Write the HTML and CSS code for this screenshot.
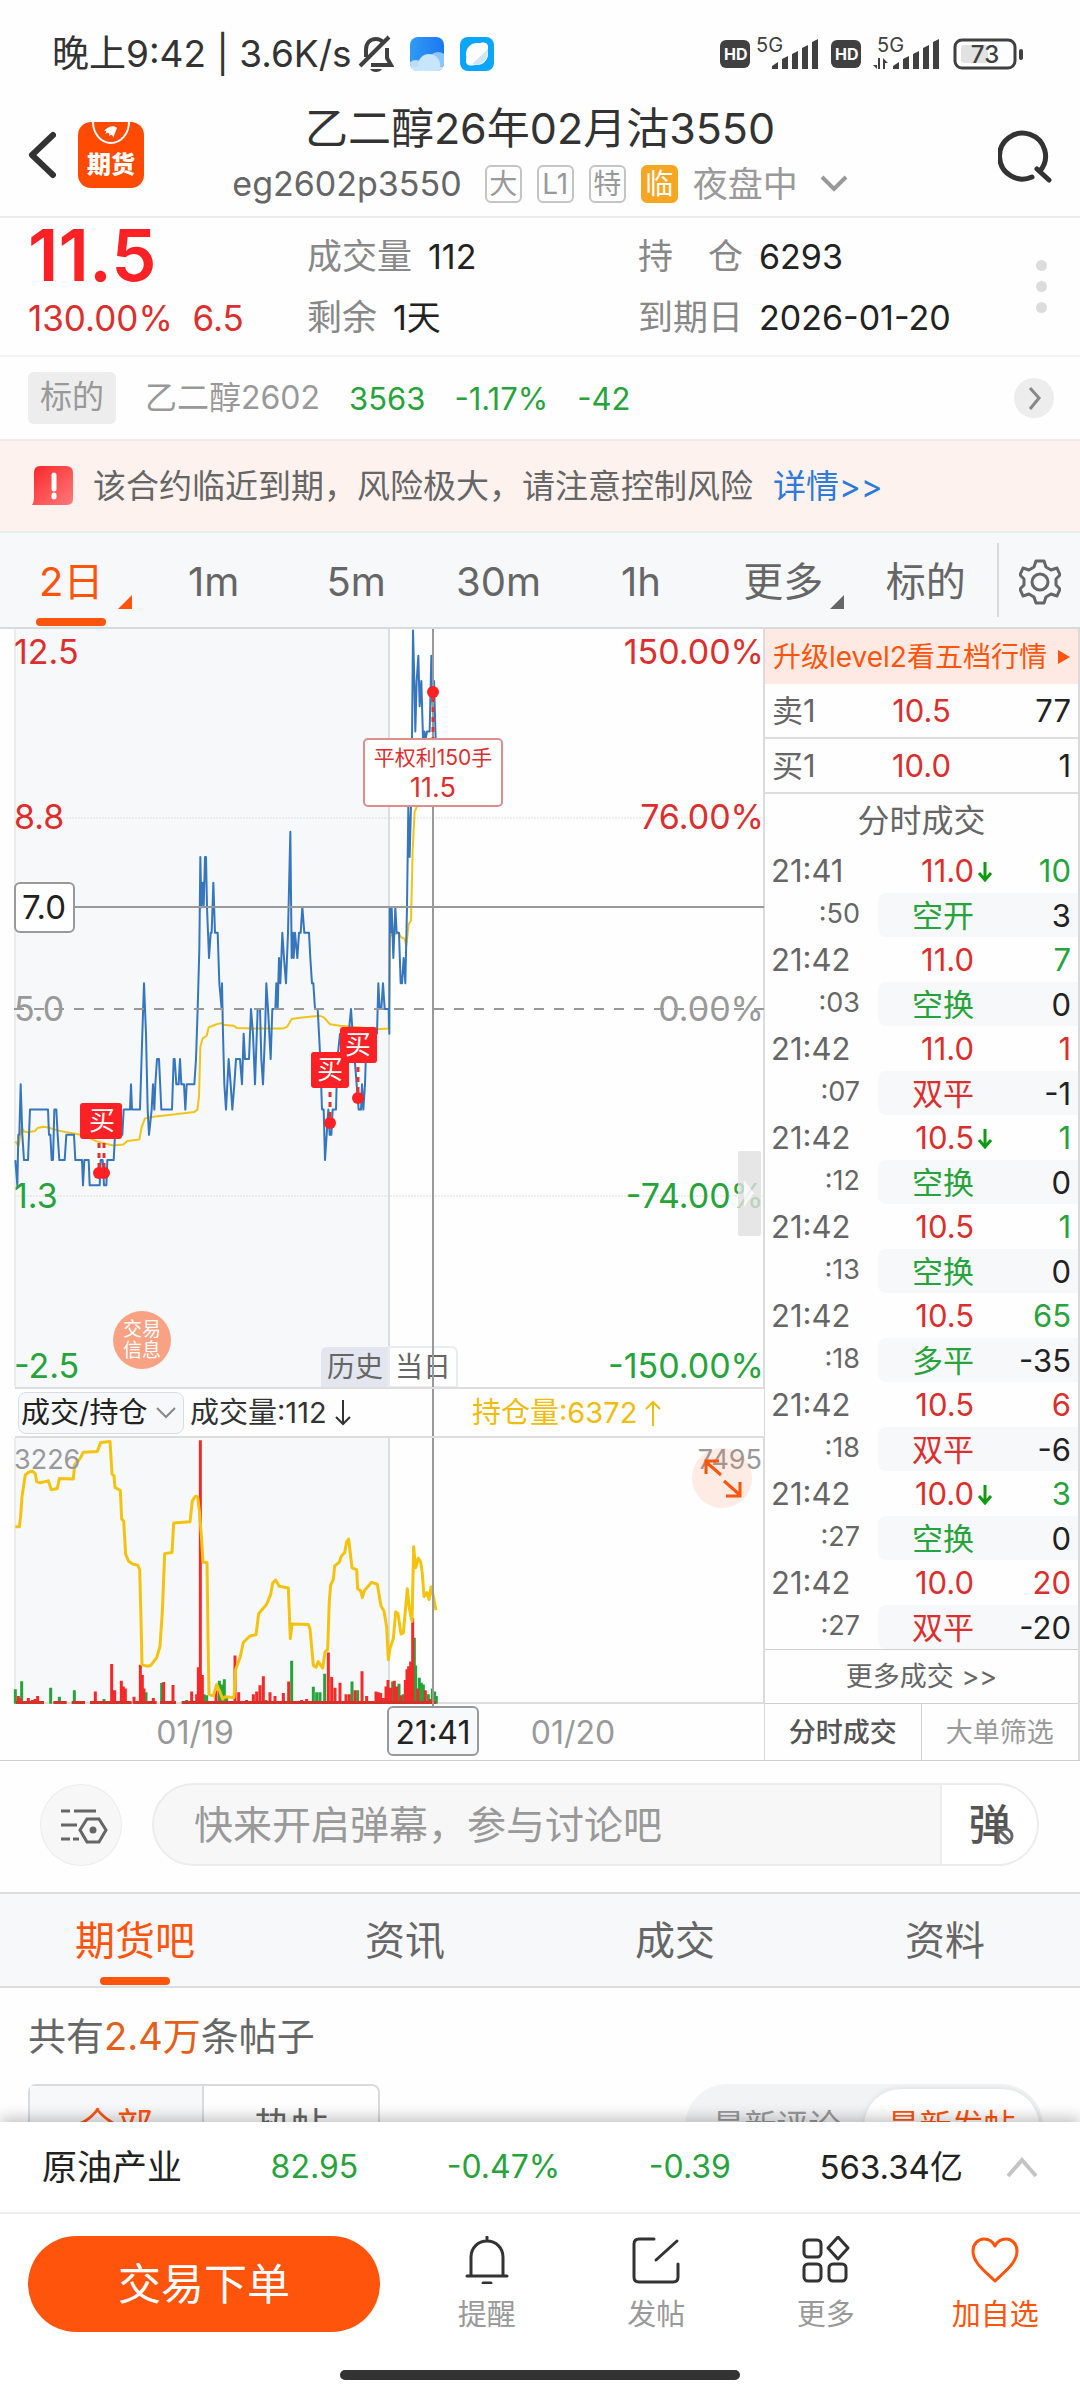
FILE: index.html
```html
<!DOCTYPE html>
<html lang="zh-CN">
<head>
<meta charset="utf-8">
<meta name="viewport" content="width=device-width, initial-scale=1">
<title>乙二醇26年02月沽3550</title>
<link rel="stylesheet" href="styles.css">
</head>
<body>
<div class="app">
  <header class="top">
    <div class="status">
      <span class="status-text">晚上9:42 | 3.6K/s</span>
      <svg class="status-bell" width="36" height="38" viewBox="0 0 36 38" fill="none" stroke="#404040" stroke-width="4">
        <path d="M8 22V15C8 8 12 4 18 4C21 4 23 5 25 7M29 13V23L33 30H13M2 31L31 2"/>
        <path d="M12 34H24C22 38 14 38 12 34Z" fill="#404040" stroke="none"/>
      </svg>
      <svg class="status-app" width="34" height="34" viewBox="0 0 34 34">
        <defs>
          <linearGradient id="sky" x1="0" x2="1"><stop offset="0" stop-color="#2f9bf5"/><stop offset="1" stop-color="#1c78f0"/></linearGradient>
          <clipPath id="tile"><rect width="34" height="34" rx="8"/></clipPath>
        </defs>
        <g clip-path="url(#tile)">
          <rect width="34" height="34" fill="url(#sky)"/>
          <circle cx="28" cy="25" r="10" fill="#8cc5fa"/>
          <circle cx="6" cy="32" r="9" fill="#b9defd"/>
          <circle cx="19" cy="28" r="11" fill="#c8e5fe"/>
          <rect y="30" width="34" height="4" fill="#c8e5fe"/>
        </g>
      </svg>
      <svg class="status-app" width="34" height="34" viewBox="0 0 34 34">
        <rect width="34" height="34" rx="8" fill="#0ba5fb"/>
        <circle cx="17" cy="17" r="11" fill="#fff"/>
        <path d="M7 27C5 25 6 20 8 17L17 27C13 29 9 29 7 27ZM27 7C29 9 28 14 26 17L18 7C21 5 25 5 27 7Z" fill="#fff"/>
        <path d="M28 12L12 27C19 30 28 25 28 12Z" fill="#cfe6f8"/>
      </svg>
      <svg class="status-right" width="306" height="54" viewBox="0 -8 306 54" fill="#404040">
        <rect x="0" y="5" width="30" height="28" rx="6"/>
        <text class="hd" x="4" y="25">HD</text>
        <text class="net" x="36" y="17">5G</text>
        <path id="bars" d="M52 34V31L58 27V34ZM62 34V24L68 21V34ZM72 34V19L78 16V34ZM82 34V13L88 10V34ZM92 34V7L98 4V34Z"/>
        <rect x="111" y="5" width="30" height="28" rx="6"/>
        <text class="hd" x="115" y="25">HD</text>
        <text class="net" x="157" y="17">5G</text>
        <use href="#bars" x="121"/>
        <path d="M157 23V34L153 30H157ZM158 23H160V34H158ZM163 23L168 28H165V34H163Z"/>
        <rect x="235" y="5" width="60" height="28" rx="7" fill="none" stroke="#404040" stroke-width="3"/>
        <rect x="241" y="10" width="27" height="18" rx="3" fill="#e2e2e2"/>
        <text class="batt" x="265" y="28" text-anchor="middle">73</text>
        <rect x="299" y="14" width="4" height="11" rx="2"/>
      </svg>
    </div>
    <div class="titlebar">
      <div class="title-left">
        <button class="back" aria-label="返回">
          <svg width="28" height="48" viewBox="0 0 28 48" fill="none" stroke="#333" stroke-width="6" stroke-linecap="round" stroke-linejoin="round"><path d="M25 4L4 24L25 44"/></svg>
        </button>
        <svg class="logo" width="66" height="66" viewBox="0 0 66 66">
          <rect width="66" height="66" rx="13" fill="#ff4a04"/>
          <path d="M15 0A18 21 0 0 0 51 0" fill="none" stroke="#fff" stroke-width="2"/>
          <path d="M26 9C30 4 36 3 39 6L35 16C35 12 33 13 31 14C32 10 30 11 27 12C29 9 28 8 26 9Z" fill="#fff"/>
          <text x="33" y="51" text-anchor="middle">期货</text>
        </svg>
      </div>
      <div class="heading">
        <h1>乙二醇26年02月沽3550</h1>
        <div class="subhead">
          <span class="code">eg2602p3550</span>
          <span class="tag">大</span><span class="tag">L1</span><span class="tag">特</span><span class="tag tag-warn">临</span>
          <span class="session">夜盘中</span>
          <svg width="28" height="18" viewBox="0 0 28 18" fill="none" stroke="#999" stroke-width="4"><path d="M2 2L14 14L26 2"/></svg>
        </div>
      </div>
      <button class="search" aria-label="搜索">
        <svg width="54" height="54" viewBox="0 0 54 54" fill="none" stroke="#333" stroke-width="5" stroke-linecap="round"><path d="M34 48A23 23 0 1 1 42 42M39 40L51 51"/></svg>
      </button>
    </div>
  </header>

  <main class="content">
    <section class="quote">
      <div class="price"><strong>11.5</strong><span>130.00%&nbsp; 6.5</span></div>
      <dl class="stats">
        <div><dt>成交量</dt><dd>112</dd></div>
        <div><dt>剩余</dt><dd>1天</dd></div>
      </dl>
      <dl class="stats stats-wide">
        <div><dt>持　仓</dt><dd>6293</dd></div>
        <div><dt>到期日</dt><dd>2026-01-20</dd></div>
      </dl>
      <button class="dots" aria-label="更多信息"><i></i><i></i><i></i></button>
    </section>

    <section class="underlying">
      <span class="chip">标的</span>
      <span class="name">乙二醇2602</span>
      <span class="down">3563</span><span class="down">-1.17%</span><span class="down">-42</span>
      <button class="go" aria-label="查看标的"><svg width="41" height="41" viewBox="0 0 41 41" fill="none"><circle cx="20" cy="20" r="20" fill="#ededed"/><path d="M16 10L25 20L16 31" stroke="#888" stroke-width="3"/></svg></button>
    </section>

    <section class="notice">
      <svg width="41" height="40" viewBox="0 0 41 40">
        <defs><linearGradient id="alert" x1="0" y1="0" x2="1" y2="1"><stop offset="0" stop-color="#f9262b"/><stop offset="1" stop-color="#ff7a7a"/></linearGradient></defs>
        <path d="M8 0H34Q41 0 41 7V33Q41 39 34 39H0Q2 36 2 32V7Q2 0 8 0Z" fill="url(#alert)"/>
        <path d="M22 9V23M22 29V31" stroke="#fff" stroke-width="5" stroke-linecap="round"/>
      </svg>
      <span>该合约临近到期，风险极大，请注意控制风险</span>
      <a href="#detail">详情&gt;&gt;</a>
    </section>

    <nav class="periods">
      <button class="on">2日<svg class="corner" width="14" height="14"><path d="M14 0V14H0Z" fill="#ff540c"/></svg></button>
      <button>1m</button><button>5m</button><button>30m</button><button>1h</button>
      <button>更多<svg class="corner" width="14" height="14"><path d="M14 0V14H0Z" fill="#666"/></svg></button>
      <button>标的</button>
      <button class="gear" aria-label="设置">
        <svg width="42" height="46" viewBox="0 0 42 46" fill="none" stroke="#666" stroke-width="3" stroke-linejoin="round"><path d="M17 2H25L27 8L32 11L38 9L41 16L37 20V26L41 30L38 37L32 35L27 38L25 44H17L15 38L10 35L4 37L1 30L5 26V20L1 16L4 9L10 11L15 8Z"/><circle cx="21" cy="23" r="8"/></svg>
      </button>
    </nav>

    <section class="market">
      <div class="chart">
        <svg class="plot" viewBox="0 0 764 758">
          <rect x="15" y="0" width="374" height="758" fill="#f6f8fa"/>
          <path d="M15 0V758" stroke="#ddd" stroke-width="1"/>
          <path d="M389 0V758M764 0V758" stroke="#ddd" stroke-width="2"/>
          <path d="M15 189H764M15 567H764" stroke="#ddd" stroke-width="1" stroke-dasharray="2 1"/>
          <svg x="0" y="0" width="764" height="758" viewBox="0 23 2292 1981" preserveAspectRatio="none" class="lines">
            <path stroke="#f0c419" d="M46 1362L56 1374L65 1325L72 1336L84 1338L105 1335L113 1327L130 1324L145 1326L175 1334L225 1342L250 1346L290 1362L340 1373L370 1370L382 1361L418 1357L425 1325L435 1302L460 1298L520 1292L583 1285L592 1279L597 1245L601 1115L608 1093L620 1086L626 1064L650 1056L664 1053L674 1058L702 1060L710 1066L760 1067L850 1067L862 1062L875 1042L900 1039L960 1034L972 1038L990 1056L1020 1060L1075 1064L1130 1069L1166 1067L1170 825L1195 817L1203 828L1214 833L1219 850L1226 795L1233 785L1238 600L1244 500L1252 485"/>
            <path stroke="#3576bf" d="M46 1411L52 1477L55 1345L58 1345L62 1213L67 1345L72 1411L84 1411L90 1279L144 1279L147 1345L151 1345L155 1411L159 1411L163 1279L169 1279L173 1345L178 1411L194 1411L199 1345L222 1345L226 1411L246 1411L249 1477L253 1411L266 1411L269 1477L299 1477L302 1411L308 1411L312 1477L319 1477L322 1411L341 1411L345 1345L367 1345L371 1279L390 1279L393 1213L396 1279L420 1279L427 1081L432 949L438 1081L443 1279L447 1345L455 1279L459 1213L463 1279L466 1213L471 1147L477 1147L484 1279L516 1279L521 1147L524 1147L529 1213L536 1213L540 1147L544 1213L552 1213L556 1279L560 1213L583 1213L588 1147L593 1016L598 860L601 619L604 750L608 686L611 750L615 619L618 619L621 750L627 883L632 817L635 817L640 686L645 817L653 817L658 949L665 1016L666 949L669 1081L673 1213L678 1279L686 1147L692 1213L697 1279L703 1213L708 1147L720 1147L726 1213L731 1081L735 1147L747 1147L753 1016L759 1081L765 1213L773 1016L780 1016L784 1147L789 1213L795 1081L799 949L804 1016L812 1147L817 1016L826 1016L829 949L833 1016L837 883L841 949L847 817L852 883L858 949L864 817L871 553L875 883L879 817L881 883L885 817L892 883L897 817L902 817L907 750L913 817L927 817L931 883L936 949L940 949L945 1016L953 1016L957 1081L961 1147L966 1279L971 1279L975 1411L980 1345L985 1279L989 1345L994 1345L998 1279L1008 1279L1012 1147L1020 1081L1046 1081L1053 1016L1058 1081L1064 1147L1070 1213L1076 1279L1083 1279L1086 1213L1090 1279L1095 1213L1100 1081L1131 1081L1135 949L1139 1016L1144 1016L1149 949L1154 1016L1166 1016L1168 1081L1169 750L1172 817L1175 750L1180 883L1186 750L1190 817L1197 817L1202 949L1206 949L1211 883L1216 949L1221 750L1225 487L1229 619L1233 487L1236 310L1239 27L1243 159L1246 291L1250 159L1255 93L1259 225L1264 159L1269 310L1273 291L1277 310L1281 291L1289 291L1294 93L1298 225L1302 159L1307 310"/>
          </svg>
          <path d="M14 380H764" stroke="#999" stroke-width="2" stroke-dasharray="10 10"/>
          <path d="M15 278H764" stroke="#999" stroke-width="2"/>
          <g class="day"><path d="M389 718H327Q321 718 321 724V758H389Z" fill="#e3e6ee"/><path d="M389 718H451Q457 718 457 724V758H389Z" fill="#fff" stroke="#e9ebf2" stroke-width="2"/><text x="327" y="748">历史</text><text x="395" y="748">当日</text></g>
          <path d="M433 0V758" stroke="#999" stroke-width="2"/>
          <g class="axis">
            <g fill="#dc2f2d"><text x="14" y="35">12.5</text><text x="14" y="200">8.8</text></g>
            <g fill="#999"><text x="14" y="392">5.0</text></g>
            <g fill="#26a43b"><text x="14" y="579">1.3</text><text x="14" y="749">-2.5</text></g>
            <g text-anchor="end">
              <g fill="#dc2f2d"><text x="764" y="35">150.00%</text><text x="764" y="200">76.00%</text></g>
              <text x="764" y="392" fill="#999">0.00%</text>
              <g fill="#26a43b"><text x="764" y="579">-74.00%</text><text x="764" y="749">-150.00%</text></g>
            </g>
            <rect x="15" y="254" width="59" height="49" rx="5" fill="#fff" stroke="#999" stroke-width="2"/>
            <text x="44" y="290" text-anchor="middle" fill="#222" class="cursor">7.0</text>
          </g>
          <g stroke="#e53030" stroke-width="3" stroke-dasharray="5 5"><path d="M99 514V540M104 514V540M330 463V490M358 438V466M433 68V110"/></g>
          <g fill="#fb2124">
            <circle cx="99" cy="544" r="6"/><circle cx="104" cy="544" r="6"/><circle cx="330" cy="494" r="6"/><circle cx="358" cy="469" r="6"/><circle cx="433" cy="63" r="6"/>
            <rect x="80" y="474" width="42" height="36" rx="3"/><rect x="311" y="423" width="38" height="36" rx="3"/><rect x="340" y="398" width="37" height="36" rx="3"/>
          </g>
          <g class="buy" text-anchor="middle"><text x="102" y="501">买</text><text x="330" y="450">买</text><text x="358" y="425">买</text></g>
          <rect x="364" y="110" width="138" height="67" rx="4" fill="#fff" stroke="#dd8f8f" stroke-width="2"/>
          <g class="deal" text-anchor="middle"><text x="433" y="136">平权利150手</text><text class="deal-price" x="433" y="168">11.5</text></g>
          <circle cx="142" cy="711" r="29" fill="#f9a283"/>
          <g class="info" text-anchor="middle"><text x="142" y="707">交易</text><text x="142" y="728">信息</text></g>
          <rect x="738" y="522" width="23" height="85" rx="2" fill="#e0e0e0" fill-opacity=".8"/>
          <path d="M744 551L754 564L744 578Z" fill="#fff" fill-opacity=".7"/>
        </svg>
        <div class="legend">
          <select class="indicator" aria-label="指标"><option>成交/持仓</option></select>
          <span class="vol">成交量:112<svg width="16" height="26" viewBox="0 0 16 26" fill="none" stroke="#333" stroke-width="2"><path d="M8 0V24M1 17L8 24L15 17"/></svg></span>
          <span class="oi">持仓量:6372<svg width="16" height="26" viewBox="0 0 16 26" fill="none" stroke="#efbc10" stroke-width="2"><path d="M8 26V2M1 9L8 2L15 9"/></svg></span>
        </div>
        <svg class="plot" viewBox="0 0 764 322">
          <rect x="15" y="0" width="374" height="265" fill="#f6f8fa"/>
          <path d="M15 0V265" stroke="#ddd" stroke-width="1"/>
          <path d="M389 0V265M764 0V265M15 265H764" stroke="#ddd" stroke-width="2"/>
          <svg x="0" y="0" width="764" height="322" viewBox="0 726 2292 841" preserveAspectRatio="none" class="bars">
            <path stroke="#26a43b" d="M46 1420V1382M65 1420V1361M152 1420V1378M178 1420V1402M223 1420V1385M312 1420V1408M438 1420V1390M485 1420V1366M560 1420V1410M612 1420V1395M620 1420V1398M658 1420V1360M666 1420V1370M673 1420V1356M680 1420V1400M798 1420V1410M875 1420V1308M940 1420V1376M950 1420V1390M960 1420V1390M974 1420V1342M1056 1420V1362M1073 1420V1385M1178 1420V1362M1197 1420V1368M1210 1420V1395M1247 1420V1320M1243 1420V1248M1258 1420V1352M1264 1420V1365M1270 1420V1370M1285 1420V1395M1297 1420V1380M1304 1420V1388M1309 1420V1400"/>
            <path stroke="#f42a2a" d="M55 1420V1400M60 1420V1405M85 1420V1405M97 1420V1410M105 1420V1408M113 1420V1400M286 1420V1388M335 1420V1316M344 1420V1385M364 1420V1360M370 1420V1375M376 1420V1380M402 1420V1402M421 1420V1318M427 1420V1345M432 1420V1380M460 1420V1405M491 1420V1363M519 1420V1371M575 1420V1388M590 1420V1395M595 1420V1325M601 1420V732M607 1420V1345M648 1420V1385M705 1420V1294M716 1420V1390M740 1420V1410M760 1420V1395M770 1420V1388M780 1420V1372M790 1420V1348M810 1420V1390M825 1420V1400M850 1420V1392M866 1420V1362M905 1420V1410M920 1420V1408M985 1420V1286M995 1420V1350M1005 1420V1378M1020 1420V1365M1038 1420V1395M1048 1420V1395M1065 1420V1385M1086 1420V1335M1100 1420V1400M1128 1420V1388M1135 1420V1390M1142 1420V1392M1150 1420V1405M1158 1420V1375M1164 1420V1358M1172 1420V1378M1183 1420V1360M1190 1420V1375M1203 1420V1398M1216 1420V1358M1221 1420V1330M1226 1420V1322M1232 1420V1310M1238 1420V1197M1253 1420V1380M1276 1420V1385M1290 1420V1408"/>
            <path stroke="#d2322a" d="M48 1417H132M160 1417H200M215 1417H255M270 1417H395M400 1417H470M480 1417H528M545 1417H1308"/>
            <path stroke="#f4c30f" class="oi-line" d="M46 958L58 958L62 930L66 880L71 850L76 822L85 816L97 812L106 820L110 840L120 843L145 838L154 861L172 858L178 832L220 833L224 795L240 780L250 763L292 761L302 738L330 735L336 820L342 825L345 855L361 863L365 938L371 943L377 1030L386 1048L398 1055L413 1058L419 1070L423 1200L426 1318L440 1322L452 1320L470 1300L480 1270L487 1180L494 1028L516 1025L521 948L570 945L577 890L586 878L593 880L598 915L604 980L609 1050L621 1052L624 1250L627 1395L640 1400L650 1370L658 1385L668 1408L675 1402L702 1404L707 1330L720 1300L730 1260L750 1243L768 1240L776 1185L800 1160L812 1135L818 1105L827 1097L838 1113L865 1118L871 1250L876 1212L925 1213L930 1225L940 1320L948 1325L955 1310L968 1327L975 1285L983 1278L988 1150L992 1110L1000 1095L1004 1060L1018 1050L1024 1035L1034 1025L1040 997L1046 990L1056 1065L1070 1070L1073 1120L1082 1125L1087 1143L1093 1125L1115 1103L1132 1108L1143 1165L1152 1178L1160 1220L1165 1305L1170 1275L1180 1250L1187 1180L1194 1185L1203 1238L1210 1235L1222 1120L1228 1170L1236 1205L1241 1010L1247 1065L1255 1040L1262 1050L1267 1080L1272 1140L1281 1130L1287 1148L1293 1115L1300 1140L1308 1176"/>
          </svg>
          <path d="M433 0V268" stroke="#999" stroke-width="2"/>
          <g class="scale"><text x="14" y="31">3226</text><text x="762" y="31" text-anchor="end">7495</text></g>
          <circle cx="722" cy="40" r="30" fill="#ff6a30" fill-opacity=".13"/>
          <path d="M721 37L706 24M706 36V23H719M724 43L740 57M740 44V58H726" fill="none" stroke="#ff540c" stroke-width="3"/>
          <g class="dates" text-anchor="middle"><text x="195" y="306">01/19</text><text x="573" y="306">01/20</text>
            <rect x="388" y="269" width="90" height="48" rx="5" fill="#f7f9fb" stroke="#999" stroke-width="2"/>
            <text x="433" y="306" class="now">21:41</text></g>
        </svg>
      </div>

      <aside class="book">
        <a class="upgrade" href="#level2">升级level2看五档行情<svg width="12" height="14"><path d="M0 0L12 7L0 14Z" fill="#ff540c"/></svg></a>
        <div class="level"><span>卖1</span><b>10.5</b><em>77</em></div>
        <div class="level"><span>买1</span><b>10.0</b><em>1</em></div>
        <h2>分时成交</h2>
        <table class="trades">
          <tbody>
            <tr><th>21:41</th><td class="up">11.0<svg class="tick" width="16" height="20" viewBox="0 0 16 20"><path d="M8 0V17M2 11L8 18L14 11"/></svg></td><td class="down">10</td></tr>
            <tr class="sub"><th>:50</th><td class="down">空开</td><td>3</td></tr>
            <tr><th>21:42</th><td class="up">11.0</td><td class="down">7</td></tr>
            <tr class="sub"><th>:03</th><td class="down">空换</td><td>0</td></tr>
            <tr><th>21:42</th><td class="up">11.0</td><td class="up">1</td></tr>
            <tr class="sub"><th>:07</th><td class="up">双平</td><td>-1</td></tr>
            <tr><th>21:42</th><td class="up">10.5<svg class="tick" width="16" height="20" viewBox="0 0 16 20"><path d="M8 0V17M2 11L8 18L14 11"/></svg></td><td class="down">1</td></tr>
            <tr class="sub"><th>:12</th><td class="down">空换</td><td>0</td></tr>
            <tr><th>21:42</th><td class="up">10.5</td><td class="down">1</td></tr>
            <tr class="sub"><th>:13</th><td class="down">空换</td><td>0</td></tr>
            <tr><th>21:42</th><td class="up">10.5</td><td class="down">65</td></tr>
            <tr class="sub"><th>:18</th><td class="down">多平</td><td>-35</td></tr>
            <tr><th>21:42</th><td class="up">10.5</td><td class="up">6</td></tr>
            <tr class="sub"><th>:18</th><td class="up">双平</td><td>-6</td></tr>
            <tr><th>21:42</th><td class="up">10.0<svg class="tick" width="16" height="20" viewBox="0 0 16 20"><path d="M8 0V17M2 11L8 18L14 11"/></svg></td><td class="down">3</td></tr>
            <tr class="sub"><th>:27</th><td class="down">空换</td><td>0</td></tr>
            <tr><th>21:42</th><td class="up">10.0</td><td class="up">20</td></tr>
            <tr class="sub"><th>:27</th><td class="up">双平</td><td>-20</td></tr>
          </tbody>
        </table>
        <a class="more-trades" href="#trades">更多成交 &gt;&gt;</a>
        <div class="book-tabs"><button class="on">分时成交</button><button>大单筛选</button></div>
      </aside>
    </section>

    <section class="danmaku">
      <button class="dm-set" aria-label="弹幕设置">
        <svg width="80" height="80" viewBox="0 0 80 80" fill="none" stroke="#666" stroke-width="3"><path d="M20 26H29M33 26H55M20 40H36M20 54H29M32 54H38M46 34H58L65 45L58 57H46L39 45Z"/><circle cx="52" cy="45" r="2" fill="#666"/></svg>
      </button>
      <div class="dm-box">
        <input type="text" aria-label="弹幕" placeholder="快来开启弹幕，参与讨论吧">
        <button class="dm-toggle" aria-label="弹幕开关">弹<svg width="20" height="20" viewBox="0 0 20 20" fill="#fff" stroke="#666" stroke-width="3"><circle cx="10" cy="10" r="7"/><path d="M5 5L15 15"/></svg></button>
      </div>
    </section>

    <nav class="sections">
      <button class="on">期货吧</button><button>资讯</button><button>成交</button><button>资料</button>
    </nav>

    <section class="posts">
      <p>共有<b>2.4万</b>条帖子</p>
      <div class="filters">
        <div class="kind"><button class="on">全部</button><button>热帖</button></div>
        <div class="sort"><button>最新评论</button><button class="on">最新发帖</button></div>
      </div>
    </section>
  </main>

  <footer class="bottom">
    <div class="ticker">
      <div class="ticker-data"><span class="sector">原油产业</span><span class="down">82.95</span><span class="down">-0.47%</span><span class="down">-0.39</span><span>563.34亿</span></div>
      <svg width="32" height="22" viewBox="0 0 32 22" fill="none" stroke="#c4c4c4" stroke-width="4"><path d="M2 20L16 4L30 20"/></svg>
    </div>
    <div class="actions">
      <button class="order">交易下单</button>
      <button class="act"><svg width="48" height="48" viewBox="0 0 48 48" fill="none" stroke="#333" stroke-width="3" stroke-linecap="round"><path d="M24 1V5M8 39V21C8 12 15 5 24 5S40 12 40 21V39M4 40H44M20 47H28"/></svg>提醒</button>
      <button class="act"><svg width="48" height="48" viewBox="0 0 48 48" fill="none" stroke="#333" stroke-width="3" stroke-linecap="round"><path d="M22 3H7Q2 3 2 8V41Q2 46 7 46H41Q46 46 46 41V28M45 5L24 24"/></svg>发帖</button>
      <button class="act"><svg width="48" height="48" viewBox="0 0 48 48" fill="none" stroke="#333" stroke-width="3" stroke-linejoin="round"><rect x="2" y="4" width="17" height="17" rx="4"/><rect x="2" y="28" width="17" height="17" rx="4"/><rect x="27" y="28" width="17" height="17" rx="4"/><path d="M36 1L46 12L36 23L26 12Z"/></svg>更多</button>
      <button class="act fav"><svg width="48" height="48" viewBox="0 0 48 48" fill="none" stroke="#ff540c" stroke-width="3" stroke-linejoin="round"><path d="M24 45C14 35 2 27 2 15C2 8 7 3 13 3C18 3 22 6 24 10C26 6 30 3 35 3C41 3 46 8 46 15C46 27 34 35 24 45Z"/></svg>加自选</button>
    </div>
    <div class="home"></div>
  </footer>
</div>
</body>
</html>
```
FILE: styles.css
```css
* { box-sizing: border-box; }
body {
  margin: 0;
  font-family: Inter, "Noto Sans CJK SC", sans-serif;
  color: #222;
  background: #fefefe;
  line-height: 1;
}
button { border: 0; padding: 0; background: none; font: inherit; color: inherit; }
a { text-decoration: none; }
h1, h2, p, dl, dd { margin: 0; font-weight: 400; }
svg { display: block; flex: none; }
.up { color: #dc2f2d; }
.down { color: #26a43b; }

.app { display: flex; flex-direction: column; height: 100vh; min-height: 800px; }
.top, .bottom { flex: none; }
.content { flex: 1; min-height: 0; overflow-y: auto; scrollbar-width: none; }

/* status bar and title */
.status { display: flex; align-items: center; height: 108px; padding: 0 54px 0 52px; }
.status-text { font-size: 37px; line-height: 48px; color: #333; }
.status-bell { margin-left: 6px; }
.status-app { margin-left: 16px; }
.status-right { margin-left: auto; }
.hd { font-size: 16px; font-weight: 700; fill: #fff; }
.net { font-size: 20px; }
.batt { font-size: 24px; font-weight: 500; }
.titlebar { display: grid; grid-template-columns: 116px 1fr 116px; align-items: start; height: 110px; padding: 0 28px; border-bottom: 2px solid #ececec; }
.title-left { display: flex; align-items: center; gap: 22px; padding-top: 14px; }
.logo text { font-size: 24px; font-weight: 900; fill: #fff; }
.heading { display: flex; flex-direction: column; align-items: center; }
.heading h1 { font-size: 43px; line-height: 50px; margin: -5px 0 11px; color: #333; white-space: nowrap; }
.subhead { display: flex; align-items: center; color: #666; }
.code { font-size: 34px; margin-right: 23px; line-height: 40px; }
.tag { width: 37px; height: 38px; margin-right: 15px; border: 2px solid #c4c4c4; border-radius: 6px; font-size: 28px; line-height: 34px; text-align: center; color: #999; }
.tag-warn { background: #f5a623; border-color: #f5a623; color: #fff; }
.session { font-size: 35px; color: #999; margin-right: 22px; }
.search { justify-self: end; margin-top: 21px; }

/* quote */
.quote { display: flex; height: 139px; padding: 0 32px 0 28px; border-bottom: 2px solid #f2f2f2; }
.price { width: 279px; color: #dc2f2d; }
.price strong { display: block; font-size: 72px; line-height: 74px; font-weight: 600; color: #fb2124; }
.price span { display: block; font-size: 35px; line-height: 52px; }
.stats { width: 331px; padding-top: 8px; font-size: 34px; }
.stats div { display: flex; gap: 16px; line-height: 61px; }
.stats dt { font-size: 35px; color: #888; }
.stats-wide { flex: 1; }
.dots { display: flex; flex-direction: column; gap: 10px; padding-top: 42px; width: 12px; }
.dots i { width: 11px; height: 11px; border-radius: 50%; background: #dcdcdc; }

.underlying { display: flex; align-items: center; height: 82px; padding: 0 25px 0 28px; gap: 29px; font-size: 32px; }
.chip { width: 88px; height: 52px; border-radius: 6px; background: #ededed; color: #999; line-height: 50px; text-align: center; }
.name { color: #999; }
.underlying .down { font-size: 31px; }
.go { margin-left: auto; }

.notice { display: flex; align-items: center; height: 94px; padding: 0 32px; background: #fdf2ee; border: solid #ececec; border-width: 2px 0; font-size: 33px; color: #666; gap: 20px; }
.notice a { color: #2f7ad9; }

/* period tabs */
.periods { display: grid; grid-template-columns: repeat(7, 1fr) 83px; height: 96px; background: #f6f8fa; border-bottom: 2px solid #d8dadc; font-size: 40px; color: #666; }
.periods button { position: relative; padding-top: 3px; }
.periods .on, .sections .on { color: #ff540c; }
.periods .on::after, .sections .on::after { content: ""; position: absolute; left: 50%; bottom: 1px; width: 70px; height: 8px; margin-left: -35px; border-radius: 4px; background: #ff540c; }
.corner { position: absolute; left: 50%; bottom: 18px; margin-left: 47px; }
.periods .gear { display: grid; place-items: center; margin: 10px 0; border-left: 2px solid #d8dadc; }

/* chart and order book */
.market { display: grid; grid-template-columns: minmax(0, 1fr) 316px; border-bottom: 1px solid #d0d0d0; }
.plot { width: 100%; height: auto; font-family: inherit; }
.lines path, .bars path { fill: none; stroke-width: 2; vector-effect: non-scaling-stroke; stroke-linejoin: round; }
.bars path { stroke-width: 3; }
.axis { font-size: 34px; }
.cursor { font-size: 33px; }
.day { font-size: 28px; fill: #666; }
.buy { font-size: 26px; fill: #fff; }
.deal { font-size: 21px; fill: #dc2f2d; }
.deal-price { font-size: 27px; }
.info { font-size: 19px; fill: #fff; }
.scale { font-size: 27px; fill: #999; }
.dates { font-size: 32px; fill: #999; }
.dates .now { fill: #222; }
.legend { display: flex; align-items: center; height: 51px; margin-left: 15px; border: solid #ddd; border-width: 2px 0; font-size: 29px; color: #333; background: linear-gradient(#999, #999) 417px 0 / 2px 100% no-repeat; }
.indicator { appearance: none; width: 166px; height: 42px; margin: 0 6px 0 3px; padding: 0 0 0 2px; border: 1px solid #d8dce6; border-radius: 8px; font: inherit; color: #222; background: #f6f8fa url("data:image/svg+xml,%3Csvg xmlns='http://www.w3.org/2000/svg' width='20' height='12' fill='none' stroke='%23888' stroke-width='2'%3E%3Cpath d='M1 1L10 10L19 1'/%3E%3C/svg%3E") 137px center no-repeat; }
.vol, .oi { display: flex; align-items: center; gap: 8px; }
.vol { width: 282px; }
.oi { color: #efbc10; }

.book { border: solid #d8dadc; border-width: 0 2px 0 1px; font-size: 31px; color: #666; }
.upgrade { display: flex; align-items: center; justify-content: space-between; height: 55px; padding: 0 8px; background: #feeae2; color: #ff540c; font-size: 28px; white-space: nowrap; }
.level { display: grid; grid-template-columns: 1fr 1fr 1fr; align-items: center; height: 55px; padding: 0 7px; border-bottom: 2px solid #ddd; }
.level b { font-weight: 400; color: #dc2f2d; text-align: center; }
.level em { font-style: normal; color: #222; text-align: right; }
.book h2 { font-size: 32px; line-height: 54px; text-align: center; }
.trades { width: 100%; table-layout: fixed; border-collapse: separate; border-spacing: 0; }
.trades tr { height: 45px; }
.trades .sub { height: 44px; }
.trades th { width: 113px; padding: 0 0 0 6px; font-weight: 400; text-align: left; }
.trades .sub th { padding: 0 18px 4px 0; font-size: 27px; text-align: right; }
.trades td { position: relative; padding: 0 7px 0 0; text-align: right; }
.trades td:nth-child(2) { width: 118px; padding-right: 22px; }
.sub td { background: #f6f8fa; color: #222; }
.sub td:nth-child(2) { border-radius: 8px 0 0 8px; }
.sub td.up { color: #dc2f2d; }
.sub td.down { color: #26a43b; }
.tick { position: absolute; right: 3px; top: 14px; fill: none; stroke: #109a10; stroke-width: 3; }
.more-trades { display: block; border: solid #d0d0d0; border-width: 1px 0; height: 55px; line-height: 54px; text-align: center; font-size: 27px; color: #666; }
.book-tabs { display: grid; grid-template-columns: 1fr 1fr; height: 56px; font-size: 27px; color: #999; }
.book-tabs .on { font-weight: 500; color: #555; border-right: 1px solid #d0d0d0; }

/* comment bar */
.danmaku { display: flex; align-items: center; height: 131px; padding: 0 41px 4px; gap: 31px; }
.dm-set { width: 80px; height: 80px; border-radius: 50%; background: #f7f7f7; box-shadow: 0 0 0 1px #ececec; }
.dm-box { flex: 1; display: flex; height: 83px; border: 2px solid #ececec; border-radius: 42px; background: #f7f7f7; overflow: hidden; }
.dm-box input { flex: 1; min-width: 0; border: 0; padding: 0 40px; background: none; font: inherit; font-size: 39px; }
.dm-box input::placeholder { color: #999; opacity: 1; }
.dm-toggle { position: relative; width: 97px; border-left: 2px solid #ececec; background: #fff; font-size: 42px; font-weight: 500; color: #555; }
.dm-toggle svg { position: absolute; right: 22px; bottom: 18px; }

.sections { display: grid; grid-template-columns: repeat(4, 1fr); height: 96px; background: #f6f8fa; border: solid #ddd; border-width: 2px 0; font-size: 40px; color: #666; }
.sections button { position: relative; padding-top: 2px; }

.posts { padding: 0 28px; }
.posts p { font-size: 38px; line-height: 96px; color: #666; }
.posts b { font-weight: 400; color: #e3601b; }
.filters { display: flex; justify-content: space-between; }
.kind { display: grid; grid-template-columns: 1fr 1fr; width: 352px; height: 84px; border: 2px solid #d8dadc; border-radius: 8px; font-size: 37px; color: #666; }
.kind .on { background: #f6f8fa; color: #ff540c; border-right: 2px solid #d8dadc; }
.sort { display: grid; grid-template-columns: 1fr 1fr; width: 358px; height: 84px; margin-right: 9px; padding: 5px 4px; border-radius: 42px; background: #f2f3f5; font-size: 32px; color: #999; }
.sort .on { border-radius: 37px; background: #fff; color: #ff540c; box-shadow: 0 0 6px rgba(0, 0, 0, .1); }

/* bottom sheet */
.bottom { position: relative; height: 278px; background: #fff; box-shadow: 0 -4px 14px rgba(0, 0, 0, .24); }
.ticker { display: flex; align-items: center; gap: 43px; height: 92px; padding: 0 42px; border-bottom: 2px solid #ececec; font-size: 33px; }
.ticker-data { flex: 1; display: flex; align-items: center; justify-content: space-between; }
.ticker .sector { font-size: 35px; }
.ticker .down { font-size: 32px; }
.actions { display: flex; padding: 22px 0 0 28px; }
.order { width: 352px; height: 96px; margin-right: 22px; border-radius: 48px; background: #ff540c; color: #fff; font-size: 43px; }
.act { flex: 1; display: flex; flex-direction: column; align-items: center; gap: 5px; font-size: 29px; line-height: 52px; color: #999; height: 96px; }
.fav { color: #ff540c; }
.home { width: 400px; height: 10px; margin: 38px auto 0; border-radius: 5px; background: #333; }
```
